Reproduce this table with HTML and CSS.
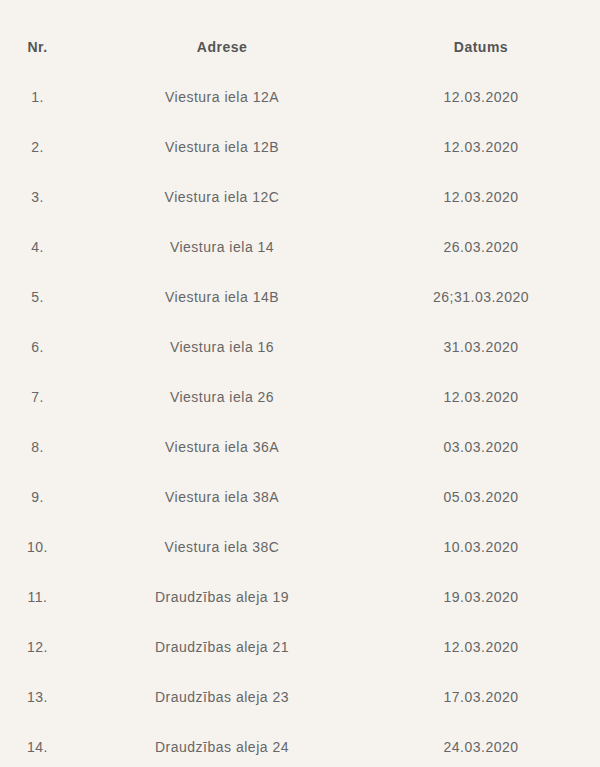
FILE: index.html
```html
<!DOCTYPE html>
<html lang="lv">
<head>
<meta charset="utf-8">
<link rel="stylesheet" href="styles.css">
</head>
<body>
<table class="list">
  <thead>
    <tr><th class="c-nr">Nr.</th><th class="c-addr">Adrese</th><th class="c-date">Datums</th></tr>
  </thead>
  <tbody>
    <tr><td>1.</td><td>Viestura iela 12A</td><td>12.03.2020</td></tr>
    <tr><td>2.</td><td>Viestura iela 12B</td><td>12.03.2020</td></tr>
    <tr><td>3.</td><td>Viestura iela 12C</td><td>12.03.2020</td></tr>
    <tr><td>4.</td><td>Viestura iela 14</td><td>26.03.2020</td></tr>
    <tr><td>5.</td><td>Viestura iela 14B</td><td>26;31.03.2020</td></tr>
    <tr><td>6.</td><td>Viestura iela 16</td><td>31.03.2020</td></tr>
    <tr><td>7.</td><td>Viestura iela 26</td><td>12.03.2020</td></tr>
    <tr><td>8.</td><td>Viestura iela 36A</td><td>03.03.2020</td></tr>
    <tr><td>9.</td><td>Viestura iela 38A</td><td>05.03.2020</td></tr>
    <tr><td>10.</td><td>Viestura iela 38C</td><td>10.03.2020</td></tr>
    <tr><td>11.</td><td>Draudzības aleja 19</td><td>19.03.2020</td></tr>
    <tr><td>12.</td><td>Draudzības aleja 21</td><td>12.03.2020</td></tr>
    <tr><td>13.</td><td>Draudzības aleja 23</td><td>17.03.2020</td></tr>
    <tr><td>14.</td><td>Draudzības aleja 24</td><td>24.03.2020</td></tr>
  </tbody>
</table>
</body>
</html>
```
FILE: styles.css
```css
html, body {
  margin: 0;
  padding: 0;
  background: #f6f3ef;
}
body {
  font-family: "Liberation Sans", Arial, sans-serif;
  font-size: 14px;
  letter-spacing: 0.5px;
  color: #666;
  padding-top: 22px;
}
.list {
  border-collapse: collapse;
  table-layout: fixed;
  width: 593px;
}
.list th, .list td {
  height: 50px;
  padding: 0;
  text-align: center;
  vertical-align: middle;
}
.list th {
  font-weight: bold;
  color: #555;
}
.c-nr { width: 75px; }
.c-addr { width: 294px; }
.c-date { width: 224px; }
```
